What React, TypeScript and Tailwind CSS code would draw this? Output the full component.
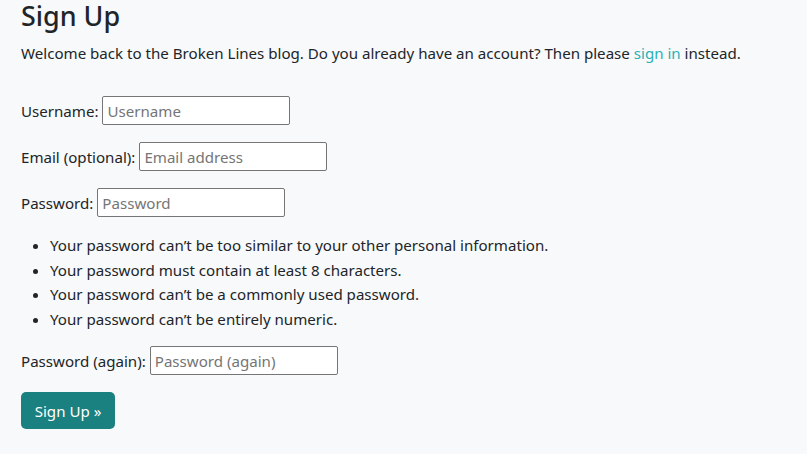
function Field({ label, placeholder, type = "text" }: { label: string; placeholder: string; type?: string }) {
  return (
    <div className="flex items-center h-[29px] gap-[4px]">
      <label>{label}</label>
      <input
        type={type}
        placeholder={placeholder}
        className="w-[188px] h-[29px] bg-white border border-[#767676] rounded-[2px] px-[4px] text-[15.1px] text-[#212529] placeholder:text-[#757575] outline-none"
      />
    </div>
  );
}

export default function App() {
  return (
    <div
      className="bg-[#f8f9fa] w-[807px] h-[454px] pl-[21px] pt-[3px] text-[#212529] text-[15.1px] leading-[24px]"
      style={{ fontFamily: "'Noto Sans', sans-serif" }}
    >
      <h2 className="text-[26.9px] leading-[31px] font-medium mt-[-3px] mb-[10px]">Sign Up</h2>
      <p>
        Welcome back to the Broken Lines blog. Do you already have an account? Then please{" "}
        <a href="#" className="text-[#27b1b6]">sign in</a> instead.
      </p>
      <form className="mt-[31px]">
        <div className="mb-[17px]">
          <Field label="Username:" placeholder="Username" />
        </div>
        <div className="mb-[17px]">
          <Field label="Email (optional):" placeholder="Email address" type="email" />
        </div>
        <div className="mb-[16px]">
          <Field label="Password:" placeholder="Password" type="password" />
        </div>
        <ul className="list-disc pl-[29px] leading-[24.5px] mb-[15px]">
          <li>Your password can’t be too similar to your other personal information.</li>
          <li>Your password must contain at least 8 characters.</li>
          <li>Your password can’t be a commonly used password.</li>
          <li>Your password can’t be entirely numeric.</li>
        </ul>
        <div className="mb-[17px]">
          <Field label="Password (again):" placeholder="Password (again)" type="password" />
        </div>
        <button
          type="submit"
          className="h-[37px] w-[94px] rounded-[5px] bg-[#1a8080] text-white text-[15.1px] text-center"
        >
          Sign Up »
        </button>
      </form>
    </div>
  );
}
